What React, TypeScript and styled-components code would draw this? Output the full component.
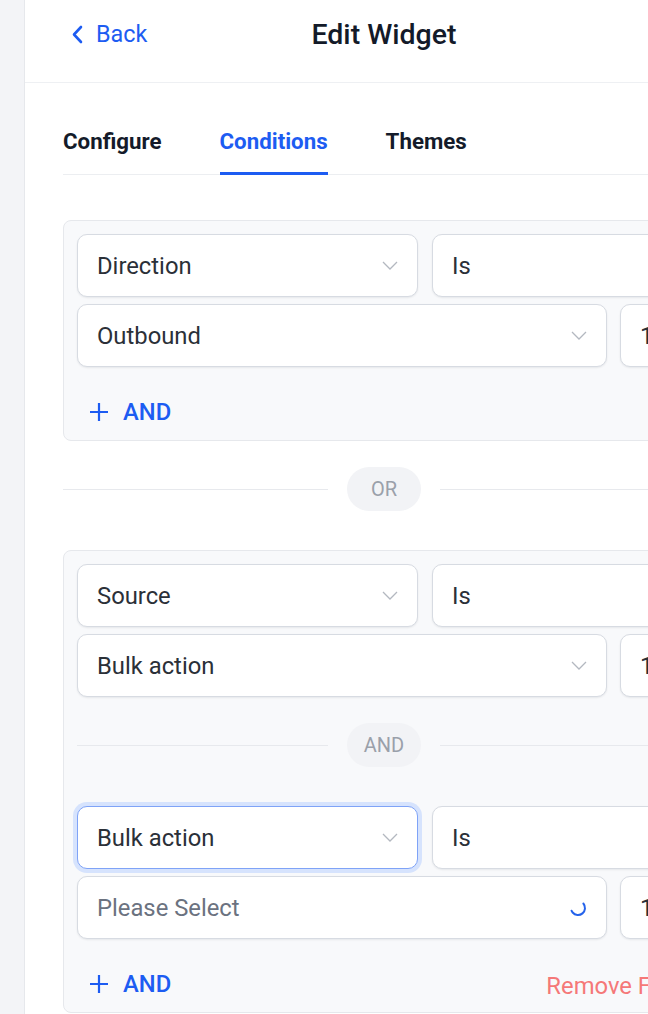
import React from "react";
import styled, { createGlobalStyle } from "styled-components";

const Global = createGlobalStyle`
  html, body { margin: 0; padding: 0; background: #ffffff; overflow: hidden; }
  body { font-family: Roboto, "Noto Sans", Arial, sans-serif; -webkit-font-smoothing: antialiased; }
  * { box-sizing: border-box; }
`;

const BLUE = "#1d5cf2";

const Page = styled.div`
  display: flex;
  width: 760px;
  min-height: 1014px;
`;

const SideStrip = styled.div`
  width: 25px;
  flex: none;
  background: #f3f4f7;
  border-right: 1px solid #e6e8ec;
`;

const Panel = styled.div`
  width: 718px;
  flex: none;
  background: #ffffff;
  display: flex;
  flex-direction: column;
`;

const Header = styled.header`
  height: 83px;
  border-bottom: 1px solid #eef0f3;
  display: grid;
  grid-template-columns: 1fr auto 1fr;
  align-items: center;
  padding: 0 47px 14px;
`;

const BackButton = styled.button`
  justify-self: start;
  display: flex;
  align-items: center;
  gap: 13px;
  border: none;
  background: none;
  padding: 0;
  color: ${BLUE};
  font-family: inherit;
  font-size: 23.4px;
  cursor: pointer;
`;

const Title = styled.h1`
  margin: 0;
  font-size: 28.5px;
  font-weight: 500;
  color: #131a29;
`;

const Body = styled.div`
  padding: 22px 38px 0;
  display: flex;
  flex-direction: column;
`;

const TabBar = styled.nav`
  display: flex;
  gap: 58px;
  border-bottom: 1px solid #eceef1;
`;

const Tab = styled.div<{ $active?: boolean }>`
  height: 70px;
  display: flex;
  align-items: center;
  font-size: 22.3px;
  font-weight: 700;
  color: ${(p) => (p.$active ? BLUE : "#141b2a")};
  box-shadow: ${(p) => (p.$active ? `inset 0 -3px 0 ${BLUE}` : "none")};
  margin-bottom: -1px;
  padding-top: 1px;
`;

const Groups = styled.div`
  margin-top: 45px;
  display: flex;
  flex-direction: column;
`;

const Group = styled.section`
  background: #f8f9fb;
  border: 1px solid #e6e8ec;
  border-radius: 8px;
  padding: 13px 13px 5px;
  display: flex;
  flex-direction: column;
`;

const Condition = styled.div`
  display: flex;
  flex-direction: column;
  gap: 7px;
`;

const Row = styled.div<{ $gap: number }>`
  display: flex;
  gap: ${(p) => p.$gap}px;
`;

const Select = styled.div<{ $w?: number; $focused?: boolean }>`
  ${(p) => (p.$w ? `width: ${p.$w}px; flex: none;` : "flex: 1; min-width: 0;")}
  height: 63px;
  background: #ffffff;
  border: 1px solid ${(p) => (p.$focused ? "#7fa3f7" : "#d7dbe2")};
  border-radius: 10px;
  box-shadow: ${(p) =>
    p.$focused
      ? "0 0 0 4px #d6e3fd"
      : "0 1px 2px rgba(16, 24, 40, 0.08)"};
  display: flex;
  align-items: center;
  justify-content: space-between;
  padding: 0 19px 0 19px;
  font-size: 23.8px;
  color: #2b3038;
  white-space: nowrap;
  overflow: hidden;
`;

const Placeholder = styled.span`
  color: #6b7280;
`;

const Footer = styled.div`
  display: flex;
  justify-content: space-between;
  align-items: center;
  height: 46px;
  margin-top: 22px;
`;

const AddButton = styled.button`
  display: flex;
  align-items: center;
  gap: 14px;
  border: none;
  background: none;
  padding: 0 12px;
  color: ${BLUE};
  font-family: inherit;
  font-size: 23.8px;
  font-weight: 500;
  cursor: pointer;
`;

const RemoveButton = styled.button`
  border: none;
  background: none;
  padding: 0;
  margin-top: 4px;
  color: #f57878;
  font-family: inherit;
  font-size: 23.8px;
  cursor: pointer;
  white-space: nowrap;
`;

const Divider = styled.div`
  display: flex;
  align-items: center;
  gap: 19px;
  margin: 26px 0 39px;
`;

const Line = styled.div`
  flex: 1;
  height: 1px;
  background: #e7e9ed;
`;

const Pill = styled.div`
  width: 74px;
  height: 44px;
  border-radius: 22px;
  background: #f2f3f6;
  color: #9aa0aa;
  font-size: 20px;
  font-weight: 400;
  display: flex;
  align-items: center;
  justify-content: center;
  flex: none;
`;

const Chevron = () => (
  <svg width="16" height="9" viewBox="0 0 16 9" fill="none">
    <polyline points="1,1 8,8 15,1" stroke="#b3b8c0" strokeWidth="1.3" />
  </svg>
);

const Spinner = () => (
  <svg width="18" height="18" viewBox="0 0 18 18" fill="none">
    <circle
      cx="9"
      cy="9"
      r="7"
      stroke="#2563eb"
      strokeWidth="2"
      strokeLinecap="round"
      strokeDasharray="24 44"
      transform="rotate(-40 9 9)"
    />
  </svg>
);

const BackIcon = () => (
  <svg width="11" height="19" viewBox="0 0 11 19" fill="none">
    <polyline
      points="9,2 2,9.5 9,17"
      stroke={BLUE}
      strokeWidth="2.6"
      strokeLinecap="round"
      strokeLinejoin="round"
    />
  </svg>
);

const PlusIcon = () => (
  <svg width="20" height="20" viewBox="0 0 20 20" fill="none">
    <path d="M10 1v18M1 10h18" stroke={BLUE} strokeWidth="2.2" />
  </svg>
);

type Cond = {
  field: string;
  value?: string;
  focused?: boolean;
  loading?: boolean;
};

const ConditionBlock = ({ field, value, focused, loading }: Cond) => (
  <Condition>
    <Row $gap={14}>
      <Select $w={341} $focused={focused}>
        {field}
        <Chevron />
      </Select>
      <Select>Is</Select>
    </Row>
    <Row $gap={13}>
      <Select $w={530}>
        {value ? value : <Placeholder>Please Select</Placeholder>}
        {loading ? <Spinner /> : <Chevron />}
      </Select>
      <Select>1</Select>
    </Row>
  </Condition>
);

const Separator = ({ label }: { label: string }) => (
  <Divider>
    <Line />
    <Pill>{label}</Pill>
    <Line />
  </Divider>
);

export default function App() {
  return (
    <Page>
      <Global />
      <SideStrip />
      <Panel>
        <Header>
          <BackButton>
            <BackIcon />
            Back
          </BackButton>
          <Title>Edit Widget</Title>
          <div />
        </Header>
        <Body>
          <TabBar>
            <Tab>Configure</Tab>
            <Tab $active>Conditions</Tab>
            <Tab>Themes</Tab>
          </TabBar>
          <Groups>
            <Group>
              <ConditionBlock field="Direction" value="Outbound" />
              <Footer>
                <AddButton>
                  <PlusIcon />
                  AND
                </AddButton>
              </Footer>
            </Group>
            <Separator label="OR" />
            <Group>
              <ConditionBlock field="Source" value="Bulk action" />
              <Separator label="AND" />
              <ConditionBlock field="Bulk action" focused loading />
              <Footer>
                <AddButton>
                  <PlusIcon />
                  AND
                </AddButton>
                <RemoveButton>Remove Filter</RemoveButton>
              </Footer>
            </Group>
          </Groups>
        </Body>
      </Panel>
    </Page>
  );
}
